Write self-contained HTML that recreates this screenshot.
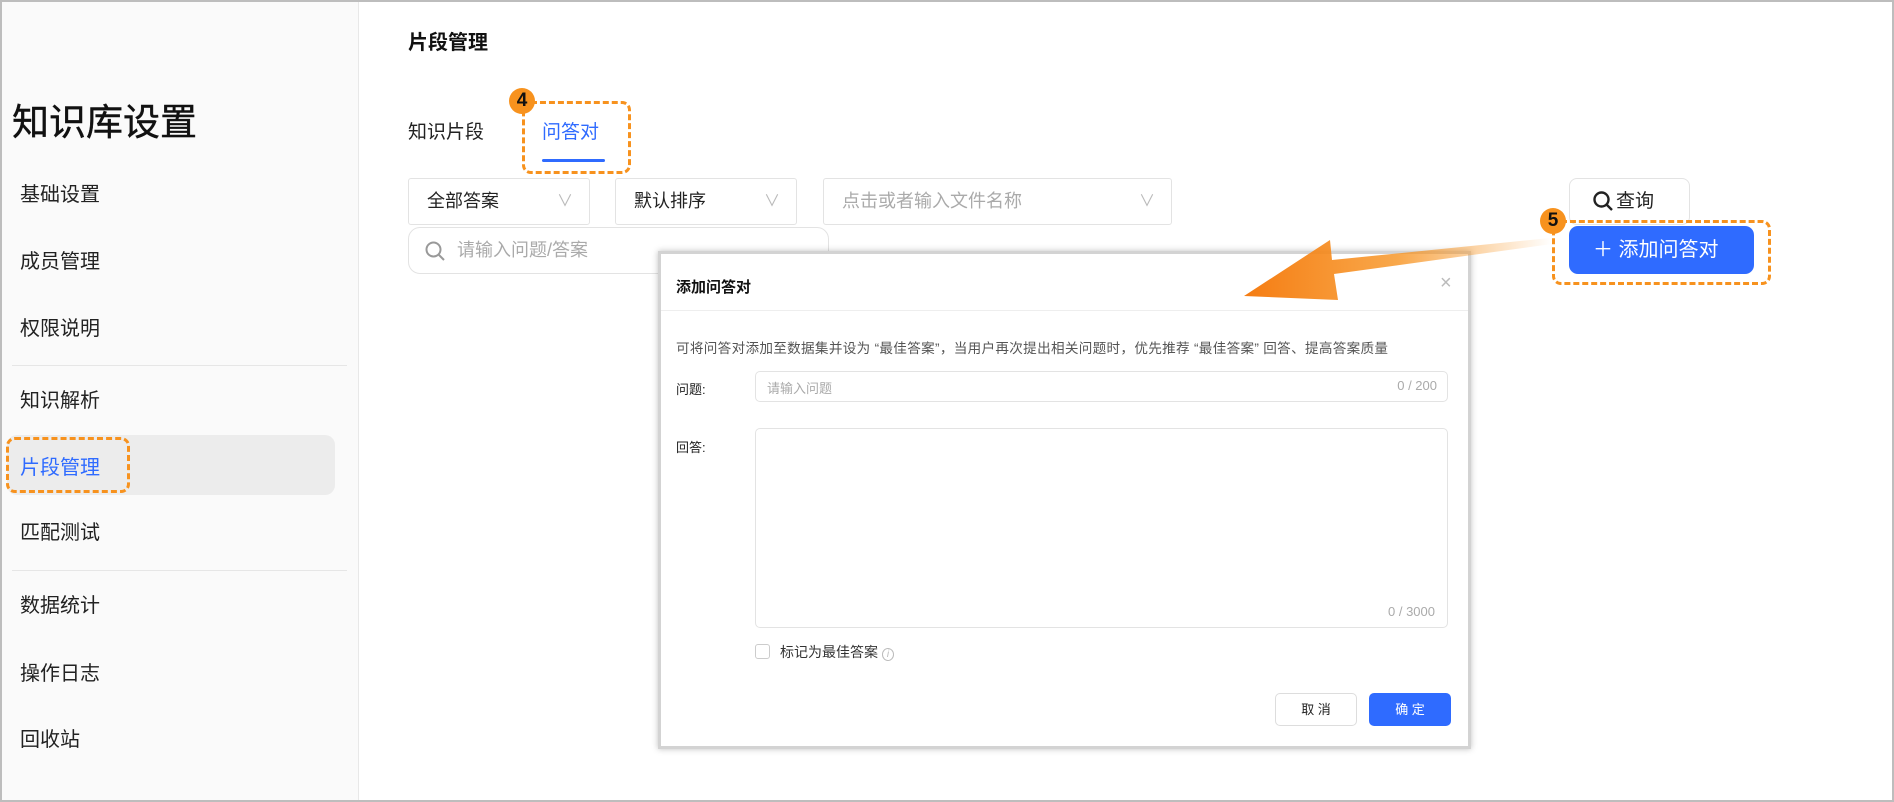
<!DOCTYPE html>
<html><head><meta charset="utf-8"><style>
*{box-sizing:border-box;margin:0;padding:0}
body{width:1894px;height:802px;position:relative;overflow:hidden;background:#fff;font-family:"Liberation Sans","Noto Sans CJK SC",sans-serif;color:#222}
.frame{position:absolute;left:0;top:0;width:1894px;height:802px;border:2px solid #bdbdbd}
.side{position:absolute;left:2px;top:2px;width:357px;height:798px;background:#fafafa;border-right:1px solid #e8e8e8}
.abs{position:absolute;white-space:nowrap}
.mi{position:absolute;left:18px;font-size:20px;color:#222}
.div{position:absolute;left:10px;width:335px;height:1px;background:#e6e6e6}
.dash{position:absolute;border:3px dashed #f7921e;border-radius:9px}
.badge{position:absolute;width:26px;height:26px;border-radius:50%;background:#f7921e;color:#111;font-weight:bold;font-size:19px;text-align:center;line-height:26px}
.sel{position:absolute;height:47px;border:1px solid #e3e3e3;border-radius:3px;font-size:18px;padding-left:18px;line-height:45px;color:#222}
.sel .ch{position:absolute;right:16px;top:0;color:#bbb;font-size:16px}
.modal{position:absolute;left:658px;top:251px;width:813px;height:498px;background:#fff;border:3px solid #d3d3d3;box-shadow:0 0 6px rgba(0,0,0,.25)}
.inp{position:absolute;border:1px solid #e3e3e3;border-radius:5px}
</style></head><body>
<div class="side">
<div class="abs" style="left:10px;top:90px;font-size:37px;color:#111;-webkit-text-stroke:0.4px #111">知识库设置</div>
<div class="mi" style="top:176px">基础设置</div>
<div class="mi" style="top:243px">成员管理</div>
<div class="mi" style="top:310px">权限说明</div>
<div class="div" style="top:363px"></div>
<div class="mi" style="top:382px">知识解析</div>
<div style="position:absolute;left:5px;top:433px;width:328px;height:60px;background:#ececec;border-radius:10px"></div>
<div class="mi" style="top:449px;color:#2f6bff">片段管理</div>
<div class="mi" style="top:514px">匹配测试</div>
<div class="div" style="top:568px"></div>
<div class="mi" style="top:587px">数据统计</div>
<div class="mi" style="top:655px">操作日志</div>
<div class="mi" style="top:721px">回收站</div>
</div>
<div class="dash" style="left:6px;top:437px;width:124px;height:56px"></div>

<div class="abs" style="left:408px;top:26px;font-size:20px;font-weight:bold;color:#111">片段管理</div>
<div class="abs" style="left:408px;top:117px;font-size:19px">知识片段</div>
<div class="abs" style="left:542px;top:117px;font-size:19px;color:#2f6bff">问答对</div>
<div style="position:absolute;left:542px;top:159px;width:63px;height:3px;background:#2f6bff;border-radius:2px"></div>
<div class="dash" style="left:522px;top:101px;width:109px;height:73px"></div>
<div class="badge" style="left:509px;top:88px">4</div>

<div class="sel" style="left:408px;top:178px;width:182px">全部答案<span class="ch">∨</span></div>
<div class="sel" style="left:615px;top:178px;width:182px">默认排序<span class="ch">∨</span></div>
<div class="sel" style="left:823px;top:178px;width:349px;color:#aaa">点击或者输入文件名称<span class="ch">∨</span></div>
<div class="sel" style="left:408px;top:227px;width:421px;border-radius:12px;color:#aaa;padding-left:48px">请输入问题/答案</div>
<svg class="abs" style="left:424px;top:240px" width="22" height="22" viewBox="0 0 22 22"><circle cx="9.5" cy="9.5" r="7" fill="none" stroke="#999" stroke-width="2"/><path d="M15 15l5 5" stroke="#999" stroke-width="2"/></svg>

<div class="sel" style="left:1569px;top:178px;width:121px;border-radius:8px;padding-left:46px;font-size:19px">查询</div>
<svg class="abs" style="left:1592px;top:190px" width="22" height="22" viewBox="0 0 22 22"><circle cx="9.5" cy="9.5" r="7" fill="none" stroke="#222" stroke-width="2.4"/><path d="M15 15l5 5" stroke="#222" stroke-width="2.4"/></svg>
<div class="abs" style="left:1569px;top:226px;width:185px;height:48px;background:#2f6bff;border-radius:9px;color:#fff;font-size:20px;line-height:48px;padding-left:24px">＋ 添加问答对</div>
<div class="dash" style="left:1552px;top:220px;width:219px;height:65px"></div>
<div class="badge" style="left:1540px;top:208px">5</div>

<div class="modal">
<div class="abs" style="left:15px;top:22px;font-size:15px;font-weight:bold;color:#111">添加问答对</div>
<div class="abs" style="left:779px;top:18px;font-size:20px;color:#bbb">×</div>
<div style="position:absolute;left:0;top:56px;width:807px;height:1px;background:#eee"></div>
<div class="abs" style="left:15px;top:83px;font-size:13.6px;color:#555;letter-spacing:0.3px">可将问答对添加至数据集并设为 “最佳答案”，当用户再次提出相关问题时，优先推荐 “最佳答案” 回答、提高答案质量</div>
<div class="abs" style="left:15px;top:125px;font-size:13px">问题:</div>
<div class="inp" style="left:94px;top:117px;width:693px;height:31px"><span class="abs" style="left:11px;top:6px;font-size:13px;color:#aaa">请输入问题</span><span class="abs" style="right:10px;top:6px;font-size:13px;color:#aaa">0 / 200</span></div>
<div class="abs" style="left:15px;top:183px;font-size:13px">回答:</div>
<div class="inp" style="left:94px;top:174px;width:693px;height:200px"><span class="abs" style="right:12px;bottom:8px;font-size:13px;color:#aaa">0 / 3000</span></div>
<div style="position:absolute;left:94px;top:390px;width:15px;height:15px;border:1px solid #ccc;border-radius:3px"></div>
<div class="abs" style="left:119px;top:388px;font-size:14px;color:#333">标记为最佳答案 <span style="color:#bbb;border:1px solid #bbb;border-radius:50%;font-size:10px;padding:0 4px;font-style:italic">i</span></div>
<div class="abs" style="left:614px;top:439px;width:82px;height:33px;border:1px solid #ddd;border-radius:5px;font-size:13px;text-align:center;line-height:31px">取 消</div>
<div class="abs" style="left:708px;top:439px;width:82px;height:33px;background:#2f6bff;border-radius:5px;font-size:13px;color:#fff;text-align:center;line-height:33px">确 定</div>
</div>

<svg class="abs" style="left:1230px;top:230px" width="330" height="80" viewBox="0 0 330 80">
<defs><linearGradient id="g" x1="1" y1="0" x2="0" y2="0"><stop offset="0" stop-color="#f7921e" stop-opacity="0"/><stop offset="0.5" stop-color="#f7921e" stop-opacity="0.8"/><stop offset="1" stop-color="#f57c12"/></linearGradient></defs>
<path d="M322 14 L104 44 L108 70 L14 66 L100 10 L102 30 L320 8 Z" fill="url(#g)"/>
</svg>
<div class="frame"></div>
</body></html>
